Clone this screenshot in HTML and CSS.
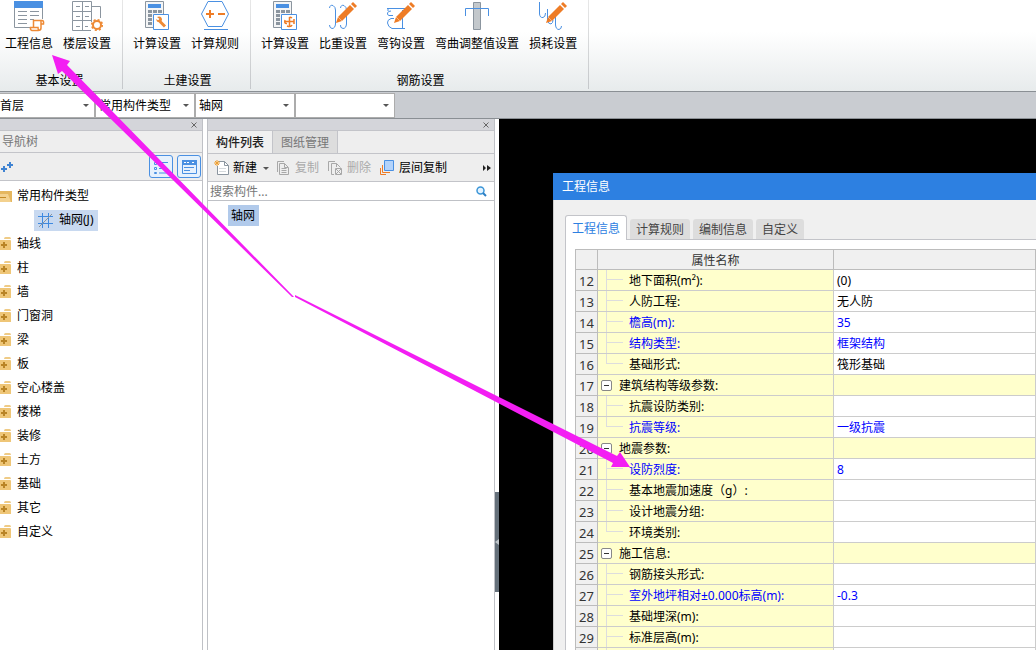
FILE: index.html
```html
<!DOCTYPE html>
<html lang="zh-CN">
<head>
<meta charset="utf-8">
<title>工程信息</title>
<link rel="stylesheet" href="styles.css">
</head>
<body>
<svg class="defs" aria-hidden="true">
  <symbol id="calc" viewBox="0 0 32 32">
    <path d="M4.500 1.500H22.500V27.500H4.500Z" fill="#f4f5f6" stroke="#8b959f"/>
    <path d="M7 4H20V8H7Z" fill="#4a90e2"/>
    <path d="M7 10h4v3H7zM12 10h4v3h-4zM17 10h4v3h-4zM7 14h4v3H7zM7 18h4v3H7zM7 22h4v3H7z" fill="#8b959f"/>
    <path d="M12.500 14.500H27.500V29.500H12.500Z" fill="#fff" stroke="#4a90e2"/>
  </symbol>
  <symbol id="pencil" viewBox="0 0 32 32">
    <path d="M9 23L11 17L23 5L27 9L15 21Z" fill="#ee7c26"/><path d="M24 4L26 2L30 6L28 8Z" fill="#ee7c26"/>
    <path d="M11 17L15 21" stroke="#f7b37f"/>
  </symbol>
  <symbol id="folder" viewBox="0 0 12 14">
    <path d="M4 2Q4 0 5.500 0H9.500Q11 0 11 2Z" fill="#efcb86"/><path d="M0 3H10Q11 3 11 4V13H0Z" fill="#efc677"/>
    <path d="M1 8H7M4 5V11" stroke="#b98426" stroke-width="2"/>
  </symbol>
</svg>

<header class="ribbon">
  <section class="group first">
    <div class="tools">
      <button class="tool"><svg class="ico" viewBox="0 0 32 32"><path d="M1.500 2V27.500H17M29.500 8V19" fill="none" stroke="#8b959f"/><path d="M1 1H30V8H1Z" fill="#4a90e2"/><path d="M5 11.500h9M5 15.500h9M5 19.500h9M5 23.500h9M17 11.500h9M17 15.500h9M17 19.500h4" stroke="#8b959f"/><path d="M20.500 20.500H29Q31 20.500 30.500 24H28V28Q28 30.500 25 30.500H19Q17 30 17.500 27.500H20.500ZM20.500 27.500H25Q25 30 26 30.500M28 24V21" fill="#fff" stroke="#ee8a35" stroke-width="1.500"/></svg><span>工程信息</span></button>
      <button class="tool"><svg class="ico" viewBox="0 0 32 32"><path d="M1.500 1.500H20.500V11.500H1.500ZM1.500 11.500H20.500V20.500H1.500ZM1.500 20.500V30.500H20M11.500 1.500V30M20.500 6.500H29.500V18M20.500 20V22M5 6.500h4M14 6.500h4M5 16.500h4M14 16.500h4M5 26.500h4M14 26.500h3" fill="none" stroke="#8b959f"/><circle cx="26" cy="25" r="4" fill="#fff" stroke="#ee8a35" stroke-width="2"/><circle cx="26" cy="25" r="5.200" fill="none" stroke="#ee8a35" stroke-width="1.800" stroke-dasharray="2.040 2.040"/></svg><span>楼层设置</span></button>
    </div>
    <h2>基本设置</h2>
  </section>
  <section class="group">
    <div class="tools">
      <button class="tool"><svg class="ico" viewBox="0 0 32 32"><use href="#calc"/><path d="M17.500 20L24 26.500" stroke="#ee8a35" stroke-width="3"/><path d="M16 17L18 16.500Q21 16.500 21 20Q20 23 16 21.500L15 19L17.500 20.500L18.500 19Z" fill="#ee8a35"/></svg><span>计算设置</span></button>
      <button class="tool"><svg class="ico" viewBox="0 0 32 32"><path d="M9 1.500H23L29.500 14L23 26.500H9L2.500 14Z" fill="#fff" stroke="#4a90e2"/><path d="M5 29.500H29" stroke="#4a90e2"/><path d="M7 14H15M11 10V18M19 14H26" stroke="#ee7c26" stroke-width="2"/></svg><span>计算规则</span></button>
    </div>
    <h2>土建设置</h2>
  </section>
  <section class="group">
    <div class="tools">
      <button class="tool"><svg class="ico" viewBox="0 0 32 32"><use href="#calc"/><path d="M16 21.500H25M20.500 17V26M20.500 18Q21 16.500 23 18M16 20Q15 24 18 23.500M25 19V24M18 26Q22 27.500 23 25" fill="none" stroke="#ee7c26" stroke-width="1.500"/></svg><span>计算设置</span></button>
      <button class="tool"><svg class="ico" viewBox="0 0 32 32"><path d="M2.500 8Q3 4.500 6 5.500Q8.500 7 8.500 10V24Q8 28.500 5 28.500Q2.500 28 2.500 25M13.500 8Q14 4.500 17 5.500Q19.500 7 19.500 10V24Q19 28.500 16 28.500Q13 28 13.500 25" fill="none" stroke="#4a90e2"/><use href="#pencil"/></svg><span>比重设置</span></button>
      <button class="tool"><svg class="ico" viewBox="0 0 32 32"><path d="M2 8.500H22M14 28.500H19M8 15.500H4Q2 15 2.500 13Q3 11 6 11M3 8.500V11M9 18.500H6Q2 20 2.500 23Q3 27 7 28.500H20M17.500 10V29" fill="none" stroke="#4a90e2"/><use href="#pencil"/></svg><span>弯钩设置</span></button>
      <button class="tool"><svg class="ico" viewBox="0 0 32 32"><path d="M12.500 2.500H19.500V29.500H12.500Z" fill="#c3c8cc" stroke="#8b959f"/><path d="M4.500 16V8.500H27.500V16" fill="none" stroke="#4a90e2"/></svg><span>弯曲调整值设置</span></button>
      <button class="tool"><svg class="ico" viewBox="0 0 32 32"><path d="M2.500 2V14Q3 18 6 17.500Q8.500 17 8.500 13M10.500 9V20Q11 24 14 24Q16 23 16 20M18.500 17V25Q19 29.500 22 29.500Q24.500 29 24.500 26" fill="none" stroke="#4a90e2"/><use href="#pencil"/></svg><span>损耗设置</span></button>
    </div>
    <h2>钢筋设置</h2>
  </section>
</header>

<nav class="filters">
  <label class="pick floor"><select aria-label="楼层"><option>首层</option></select></label>
  <label class="pick"><select aria-label="构件类型"><option>常用构件类型</option></select></label>
  <label class="pick"><select aria-label="构件"><option>轴网</option></select></label>
  <label class="pick"><select aria-label="名称"><option></option></select></label>
</nav>

<div class="work">
  <aside class="panel nav">
    <div class="grip"><button class="close" aria-label="关闭"><svg viewBox="0 0 6 6"><path d="M.5 .5L5.500 5.500M5.500 .5L.5 5.500"/></svg></button></div>
    <h3 class="caption">导航树</h3>
    <div class="navbar">
      <button class="plus" aria-label="展开"><svg viewBox="0 0 14 14"><path d="M1 9H7M4 6V12M7 5H13M10 2V8" stroke="#3f83d2" stroke-width="2"/></svg></button>
      <button class="view" aria-label="列表"><svg viewBox="0 0 16 16"><path d="M1.500 3.500h2v2h-2zM1.500 8.500h2v2h-2zM6 3.500h9M6 9.500h9M1.500 13.500h2v1h-2zM6 14h9" fill="none" stroke="#4a90e2"/></svg></button>
      <button class="view" aria-label="窗口"><svg viewBox="0 0 16 16"><path d="M1 1H16V6H1Z" fill="#4a90e2"/><path d="M1.500 6V14.500H15.500V6M3 8.500H13M3 11.500H9" fill="none" stroke="#4a90e2"/><path d="M3 3.500H9M11 3.500H14" stroke="#fff" stroke-dasharray="2 1"/></svg></button>
    </div>
    <ul class="tree">
      <li><svg class="fold" viewBox="0 0 12 14"><path d="M0 2H12V13H0Z" fill="#e5b75f"/><path d="M0 5H8L11 13H0Z" fill="#f3d18e"/><path d="M0 8.500H6" stroke="#c48a25"/></svg>常用构件类型</li>
      <li class="child"><span class="sel"><svg viewBox="0 0 15 15"><path d="M0 3.500H15M0 10.500H15M4.500 0V15M10.500 0V15" stroke="#3f8ae0"/><path d="M1 14L14 1" stroke="#8b959f"/></svg>轴网(J)</span></li>
      <li><svg class="fold"><use href="#folder"/></svg>轴线</li>
      <li><svg class="fold"><use href="#folder"/></svg>柱</li>
      <li><svg class="fold"><use href="#folder"/></svg>墙</li>
      <li><svg class="fold"><use href="#folder"/></svg>门窗洞</li>
      <li><svg class="fold"><use href="#folder"/></svg>梁</li>
      <li><svg class="fold"><use href="#folder"/></svg>板</li>
      <li><svg class="fold"><use href="#folder"/></svg>空心楼盖</li>
      <li><svg class="fold"><use href="#folder"/></svg>楼梯</li>
      <li><svg class="fold"><use href="#folder"/></svg>装修</li>
      <li><svg class="fold"><use href="#folder"/></svg>土方</li>
      <li><svg class="fold"><use href="#folder"/></svg>基础</li>
      <li><svg class="fold"><use href="#folder"/></svg>其它</li>
      <li><svg class="fold"><use href="#folder"/></svg>自定义</li>
    </ul>
  </aside>

  <section class="panel list">
    <div class="grip"><button class="close" aria-label="关闭"><svg viewBox="0 0 6 6"><path d="M.5 .5L5.500 5.500M5.500 .5L.5 5.500"/></svg></button></div>
    <div class="ptabs"><button class="on">构件列表</button><button>图纸管理</button></div>
    <div class="actions">
      <button class="new"><svg viewBox="0 0 16 16"><path d="M5 1.500H10.500L14.500 5.500V14.500H3.500V6" fill="#fff" stroke="#8b959f"/><path d="M10.500 1.500V5.500H14.500" fill="none" stroke="#8b959f"/><path d="M5 8.500h7M5 11.500h7" stroke="#d5d9dc"/><path d="M1 1L5 5M5 1L1 5M3 0V6M0 3H6" stroke="#f0a030"/></svg>新建<i class="caret"></i></button>
      <button class="off" disabled><svg viewBox="0 0 16 16"><path d="M2.500 12V1.500H9M4.500 3.500H9.500L13.500 7.500V14.500H4.500ZM9.500 3.500V7.500H13M6.500 8.500h5M6.500 10.500h5M6.500 12.500h5" fill="none" stroke="#a8a8a8"/></svg>复制</button>
      <button class="off" disabled><svg viewBox="0 0 16 16"><path d="M1.500 11V1.500H8M7 14.500H4.500V3.500H9.500L13.500 7.500M9.500 3.500V7" fill="none" stroke="#a8a8a8"/><path d="M8.500 8.500h6v6h-6zM9 9l5 5M14 9l-5 5" fill="none" stroke="#a8a8a8"/></svg>删除</button>
      <button><svg viewBox="0 0 16 16"><path d="M5.500 .5H14.500V10.500H5.500Z" fill="#b3d3fb" stroke="#4a90e2"/><path d="M3.500 5V12.500H11M1.500 8V14.500H7" fill="none" stroke="#ee7c26"/></svg>层间复制</button>
      <button class="more" aria-label="更多"><svg viewBox="0 0 8 6"><path d="M0 0L3 3L0 6ZM4 0L8 3L4 6Z" fill="#222"/></svg></button>
    </div>
    <div class="search"><input type="text" placeholder="搜索构件..." aria-label="搜索构件"><svg viewBox="0 0 11 11"><circle cx="4.500" cy="4.500" r="3.500" fill="#e4f3ff" stroke="#3c96d8" stroke-width="1.500"/><path d="M7 7L10 10" stroke="#2b7fc4" stroke-width="2"/></svg></div>
    <ul class="items"><li><span>轴网</span></li></ul>
  </section>

  <div class="split"><button aria-label="折叠"><svg viewBox="0 0 4 6"><path d="M4 0V6L0 3Z" fill="#bfc5ca"/></svg></button></div>

  <main class="canvas">
    <section class="dialog">
      <h1>工程信息</h1>
      <div class="body">
        <div class="tabs"><button class="on">工程信息</button><button>计算规则</button><button>编制信息</button><button>自定义</button></div>
        <div class="sheet">
          <table>
            <colgroup><col class="c-num"><col class="c-name"><col></colgroup>
            <thead><tr><th></th><th>属性名称</th><th></th></tr></thead>
            <tbody>
              <tr><th>12</th><td>地下面积(m²):</td><td>(0)</td></tr>
              <tr><th>13</th><td>人防工程:</td><td>无人防</td></tr>
              <tr class="key"><th>14</th><td>檐高(m):</td><td>35</td></tr>
              <tr class="key"><th>15</th><td>结构类型:</td><td>框架结构</td></tr>
              <tr class="last"><th>16</th><td>基础形式:</td><td>筏形基础</td></tr>
              <tr class="head"><th>17</th><td><button class="fold-box" aria-label="折叠"></button>建筑结构等级参数:</td><td></td></tr>
              <tr><th>18</th><td>抗震设防类别:</td><td></td></tr>
              <tr class="key last"><th>19</th><td>抗震等级:</td><td>一级抗震</td></tr>
              <tr class="head"><th>20</th><td><button class="fold-box" aria-label="折叠"></button>地震参数:</td><td></td></tr>
              <tr class="key"><th>21</th><td>设防烈度:</td><td>8</td></tr>
              <tr><th>22</th><td>基本地震加速度（g）:</td><td></td></tr>
              <tr><th>23</th><td>设计地震分组:</td><td></td></tr>
              <tr class="last"><th>24</th><td>环境类别:</td><td></td></tr>
              <tr class="head"><th>25</th><td><button class="fold-box" aria-label="折叠"></button>施工信息:</td><td></td></tr>
              <tr><th>26</th><td>钢筋接头形式:</td><td></td></tr>
              <tr class="key"><th>27</th><td>室外地坪相对±0.000标高(m):</td><td>-0.3</td></tr>
              <tr><th>28</th><td>基础埋深(m):</td><td></td></tr>
              <tr><th>29</th><td>标准层高(m):</td><td></td></tr>
              <tr><th></th><td></td><td></td></tr>
            </tbody>
          </table>
        </div>
      </div>
    </section>
  </main>
</div>

<svg class="arrows" aria-hidden="true">
  <path d="M52 55L70 61L67 65L294 297H292L62 71L58 74Z"/>
  <path d="M295 295L617 456L620 452L630 467L611 467L613 463L295 297Z"/>
</svg>
</body>
</html>
```
FILE: styles.css
```css
* { box-sizing: border-box; }
body {
  margin: 0;
  height: 100vh;
  overflow: hidden;
  display: flex;
  flex-direction: column;
  background: #fff;
  color: #000;
  font: 12px/16px "Noto Sans", "Noto Sans CJK SC", sans-serif;
}
button, input, select { font: inherit; color: inherit; margin: 0; padding: 0; border: 0; background: none; }
button { white-space: nowrap; }
h1, h2, h3, ul { margin: 0; padding: 0; font-size: 12px; font-weight: 400; list-style: none; }
svg { display: block; flex: none; }
.defs { position: absolute; width: 0; height: 0; }

.ribbon {
  display: flex;
  flex: none;
  height: 92px;
  background: linear-gradient(#fff 35%, #e7ebec);
  border-bottom: 1px solid #8a8f94;
}
.group {
  display: flex;
  flex-direction: column;
  justify-content: space-between;
  padding: 0 6px 0 4px;
  border-right: 1px solid;
  border-image: linear-gradient(#e8e8e8, #c4c7ca) 1;
  height: 89px;
  margin-right: 1px;
}
.group.first { padding-left: 0; }
.group h2 { text-align: center; padding-left: 3px; }
.tools { display: flex; }
.tool { display: flex; flex-direction: column; align-items: center; gap: 4px; padding: 0 5px; }
.ico { width: 32px; height: 32px; }

.filters {
  display: flex;
  flex: none;
  gap: 2px;
  height: 27px;
  padding: 2px 0 1px;
  background: #c9ccd1;
  border-bottom: 1px solid #8a8f94;
}
.pick { position: relative; width: 98px; background: #fff; outline: 1px solid #acacac; }
.pick.floor { width: 94px; }
.pick select { width: 100%; height: 100%; padding-left: 3px; appearance: none; outline: 0; }
.pick.floor select { padding-left: 0; }
.pick::after, .caret { content: ""; border: 3px solid transparent; border-top-color: #555; border-bottom: 0; }
.pick::after { position: absolute; right: 5px; top: 10px; }

.work { flex: 1; min-height: 0; display: flex; }
.panel { display: flex; flex-direction: column; flex: none; border: 1px solid #bfc1c6; border-width: 0 1px; }
.nav { width: 203px; border-left: 0; }
.list { width: 288px; margin-left: 4px; }
.grip { display: flex; justify-content: flex-end; align-items: center; height: 12px; padding-right: 5px; background: #d4d5da; border-bottom: 1px solid #c3c4c9; }
.close { display: flex; }
.close svg { width: 6px; height: 6px; stroke: #666; }
.caption { height: 22px; padding: 3px 2px; color: #777; background: #eee; border-bottom: 1px solid #c3c4c9; }
.navbar { display: flex; align-items: center; gap: 4px; height: 28px; padding-right: 1px; background: #eee; border-bottom: 1px solid #c3c4c9; }
.plus { margin-right: auto; }
.plus svg { width: 14px; height: 14px; }
.view { display: grid; place-items: center; width: 24px; height: 23px; border: 1px solid #4a90e2; border-radius: 3px; background: #e6f1fd; }
.view svg { width: 16px; height: 16px; }
.tree { padding-top: 3px; }
.tree li { display: flex; align-items: center; gap: 5px; height: 24px; }
.fold { width: 12px; height: 14px; }
.tree .child { padding-left: 34px; }
.sel { display: flex; align-items: center; gap: 6px; height: 21px; padding: 0 5px 0 4px; background: #c8d9f0; }
.sel svg { width: 15px; height: 15px; }

.ptabs { display: flex; height: 23px; background: #eee; border-bottom: 1px solid #c3c4c9; }
.ptabs button { width: 65px; padding-top: 2px; background: #ddd; color: #777; border-right: 1px solid #c3c4c9; }
.ptabs .on { background: #f0f0f0; color: #222; font-weight: 500; }
.actions { display: flex; align-items: center; height: 28px; padding: 1px 3px 0 6px; background: #eee; border-bottom: 1px solid #c3c4c9; }
.actions button { display: flex; align-items: center; gap: 4px; margin-right: 8px; }
.actions .new { gap: 3px; margin-right: 6px; }
.actions svg { width: 16px; height: 16px; }
.caret { margin-left: 3px; }
.actions .off { color: #aaa; }
.actions .more { margin: 0 0 0 auto; }
.actions .more svg { width: 8px; height: 6px; }
.search { display: flex; align-items: center; height: 19px; padding: 1px 7px 0 2px; border-bottom: 1px solid #bfc1c6; }
.search input { flex: 1; min-width: 0; outline: 0; }
.search input::placeholder { color: #777; opacity: 1; }
.search svg { width: 11px; height: 11px; }
.items { padding: 4px 20px; }
.items span { display: inline-block; height: 21px; padding: 3px 4px 2px 3px; background: #b1caeb; }

.split { display: flex; width: 4px; padding-top: 373px; flex: none; }
.split button { display: flex; align-items: center; width: 4px; height: 100px; background: #65707a; }
.split svg { width: 4px; height: 6px; }

.canvas { flex: 1; min-width: 0; display: flex; background: #000; padding: 54px 0 0 54px; }
.dialog { flex: 1; min-width: 0; background: #f0f0f0; border-left: 1px solid #ccc; }
.dialog h1 { height: 27px; margin-left: -1px; padding: 6px 9px; background: #2d80e1; color: #fff; }
.body { padding: 15px 0 0 11px; }
.tabs { display: flex; align-items: flex-end; gap: 3px; height: 25px; position: relative; z-index: 1; }
.tabs button { height: 20px; margin-bottom: 1px; padding: 2px 6px 0; border-radius: 3px 3px 0 0; background: #ddd; color: #444; }
.tabs .on { height: 25px; margin-bottom: 0; border: 1px solid #c3c4c9; border-bottom: 0; background: #fff; color: #2d80e1; }
.sheet { margin-top: -1px; padding: 9px 0 0 9px; background: #fff; border: 1px solid #c3c4c9; border-width: 1px 0 0 1px; }
table { width: 100%; table-layout: fixed; border-collapse: separate; border-spacing: 0; border-top: 1px solid #bcbcbc; border-left: 1px solid #bcbcbc; }
.c-num { width: 22px; }
.c-name { width: 236px; }
th, td { height: 21px; padding: 2px 3px 0; line-height: 16px; text-align: left; font-weight: 400; white-space: nowrap; border: 1px solid #ccc; border-width: 0 1px 1px 0; }
thead th { height: 20px; text-align: center; background: #f0f0f0; color: #333; border-color: #bcbcbc; }
tbody th { padding: 1px 0 0; text-align: center; font-size: 13px; background: #f0f0f0; color: #333; border-color: #bcbcbc; }
td:nth-child(2) {
  padding-left: 31px;
  background:
    linear-gradient(#ddd, #ddd) 9px 9px / 16px 1px no-repeat,
    linear-gradient(#ddd, #ddd) 8px 0 / 1px 100% no-repeat,
    #ffc;
}
.last td:nth-child(2) {
  background:
    linear-gradient(#ddd, #ddd) 9px 9px / 16px 1px no-repeat,
    linear-gradient(#ddd, #ddd) 8px 0 / 1px 10px no-repeat,
    #ffc;
}
.head td, .head td:nth-child(2) { padding-left: 3px; background: #ffc; }
.key td { color: #00f; }
.fold-box {
  width: 11px;
  height: 11px;
  margin-right: 7px;
  border: 1px solid #888;
  border-radius: 2px;
  background: linear-gradient(#333, #333) center / 5px 1px no-repeat, #fff;
}

.arrows { position: absolute; left: 0; top: 0; width: 700px; height: 500px; pointer-events: none; fill: #f31ef3; }
```
